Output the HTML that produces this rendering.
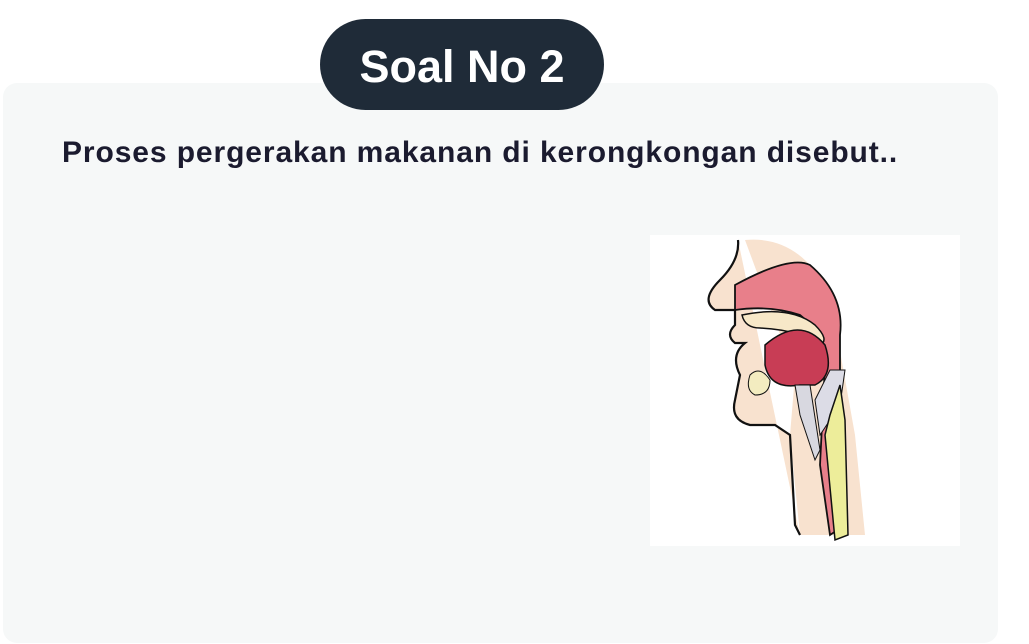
<!DOCTYPE html>
<html><head><meta charset="utf-8"><style>
body{margin:0;width:1029px;height:644px;background:#fff;position:relative;overflow:hidden;font-family:"Liberation Sans",sans-serif}
.card{position:absolute;left:3px;top:83px;width:995px;height:560px;background:#f6f8f8;border-radius:14px}
.pill{position:absolute;left:320px;top:19px;width:284px;height:91px;background:#1f2b38;border-radius:46px;color:#fff;font-weight:bold;font-size:45px;line-height:96px;text-align:center}
.q{position:absolute;left:62px;top:136px;font-size:30px;font-weight:bold;color:#1b1b2f;letter-spacing:0.9px;white-space:nowrap}
.img{position:absolute;left:650px;top:235px;width:310px;height:311px;background:#fff}
</style></head><body>
<div class="card"></div>
<div class="pill">Soal No 2</div>
<div class="q">Proses pergerakan makanan di kerongkongan disebut..</div>
<div class="img"><svg width="310" height="311" viewBox="0 0 310 311">
<path d="M95 5 Q150 0 180 60 L205 200 L215 300 L150 300 L140 200 L145 140 Z" fill="#f8e2cf"/>
<path d="M88 5 Q90 25 70 45 Q50 65 65 75 L85 75 L85 90 Q75 100 85 108 L95 108 Q80 120 90 140 L85 165 Q80 185 100 190 L125 190 L140 200 L145 290 L150 300" fill="#f8e2cf" stroke="#111" stroke-width="2.2"/>
<path d="M85 50 Q140 20 160 30 Q195 60 190 100 L190 180 L195 290 L180 300 L170 230 L175 130 Q170 95 150 80 Q120 70 85 75 Z" fill="#e87f8a" stroke="#111" stroke-width="1.8"/>
<path d="M92 80 Q140 70 165 90 Q180 105 170 110 Q150 95 110 93 Q95 93 92 80 Z" fill="#f7e8c8" stroke="#111" stroke-width="1.5"/>
<path d="M115 110 Q150 80 175 110 Q185 140 165 150 L150 150 Q120 155 115 130 Z" fill="#c83d55" stroke="#111" stroke-width="1.5"/>
<path d="M100 140 Q110 130 120 145 Q120 160 105 160 Q95 155 100 140 Z" fill="#f3ecc0" stroke="#111" stroke-width="1"/>
<path d="M145 150 L160 150 L170 215 L165 225 L150 180 Z" fill="#d8d8e0" stroke="#111" stroke-width="1"/>
<path d="M180 135 L195 135 L190 170 L170 200 L165 165 Z" fill="#dcdce6" stroke="#111" stroke-width="1"/>
<path d="M190 150 L195 185 L198 300 L185 305 L175 200 L180 180 Z" fill="#eded9a" stroke="#111" stroke-width="1.5"/>
</svg></div>
</body></html>
